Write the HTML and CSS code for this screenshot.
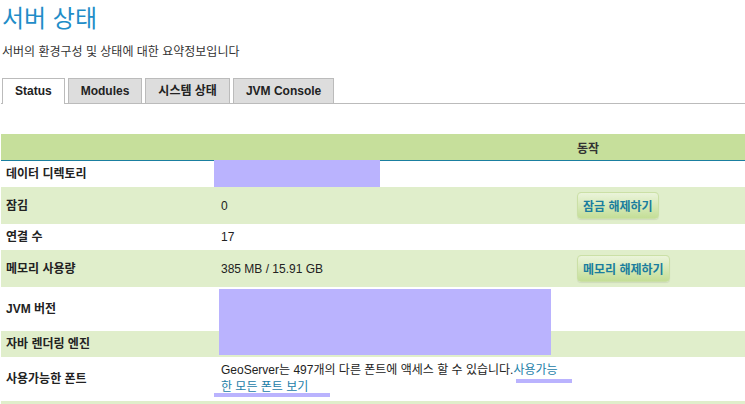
FILE: index.html
```html
<!DOCTYPE html>
<html lang="ko">
<head>
    <meta charset="UTF-8">
    <title>서버 상태</title>
    <link rel="stylesheet" href="styles.css">
</head>
<body>
    <div class="page">
        <h1 class="title">서버 상태</h1>
        <p class="intro">서버의 환경구성 및 상태에 대한 요약정보입니다</p>

        <ul class="tabs">
            <li class="tab active">Status</li>
            <li class="tab">Modules</li>
            <li class="tab">시스템 상태</li>
            <li class="tab">JVM Console</li>
        </ul>

        <div class="status-wrap">
            <table class="status">
                <thead>
                    <tr>
                        <th class="col-label"></th>
                        <th class="col-value"></th>
                        <th class="col-action">동작</th>
                    </tr>
                </thead>
                <tbody>
                    <tr>
                        <td class="label">데이터 디렉토리</td>
                        <td></td>
                        <td></td>
                    </tr>
                    <tr class="odd">
                        <td class="label">잠김</td>
                        <td>0</td>
                        <td><button class="btn">잠금 해제하기</button></td>
                    </tr>
                    <tr>
                        <td class="label">연결 수</td>
                        <td>17</td>
                        <td></td>
                    </tr>
                    <tr class="odd">
                        <td class="label">메모리 사용량</td>
                        <td>385 MB / 15.91 GB</td>
                        <td><button class="btn">메모리 해제하기</button></td>
                    </tr>
                    <tr class="tall">
                        <td class="label">JVM 버전</td>
                        <td></td>
                        <td></td>
                    </tr>
                    <tr class="odd">
                        <td class="label">자바 렌더링 엔진</td>
                        <td></td>
                        <td></td>
                    </tr>
                    <tr>
                        <td class="label">사용가능한 폰트</td>
                        <td class="fonts">GeoServer는 497개의 다른 폰트에 액세스 할 수 있습니다.<a href="#">사용가능한 모든 폰트 보기</a></td>
                        <td></td>
                    </tr>
                    <tr class="odd">
                        <td class="label"></td>
                        <td></td>
                        <td></td>
                    </tr>
                </tbody>
            </table>

            <!-- redacted areas -->
            <div class="redact r-dir"></div>
            <div class="redact r-jvm"></div>
            <div class="redact r-line1"></div>
            <div class="redact r-line2"></div>
        </div>
    </div>
</body>
</html>
```

FILE: styles.css
```css
body {
    margin: 0;
    background: white;
    font-family: "Liberation Sans", "Noto Sans CJK KR", sans-serif;
    font-size: 12px;
    color: #222;
    overflow: hidden;
}

.page {
    padding: 0 0 0 1px;
}

.title {
    margin: 0;
    padding: 4px 0 0 1px;
    font-size: 24px;
    font-weight: normal;
    line-height: 30px;
    color: #1f8dc8;
}

.intro {
    margin: 10px 0 0 1px;
    line-height: 16px;
    color: #333;
}

.tabs {
    list-style: none;
    margin: 18px 0 0;
    padding: 0 0 0 1px;
    display: flex;
    gap: 3px;
    border-bottom: 1px solid #bbb;
}

.tab {
    padding: 0 12px;
    height: 24px;
    line-height: 25px;
    margin-bottom: -1px;
    border: 1px solid #bbb;
    border-bottom: none;
    background: #dddddd;
    font-weight: bold;
    font-size: 12px;
    color: #222;
}

.tab.active {
    background: white;
    height: 25px;
}

.status-wrap {
    position: relative;
    margin-top: 30px;
}

.status {
    width: 744px;
    border-collapse: collapse;
    table-layout: fixed;
}

.status th {
    background: #c6df9b;
    height: 26px;
    padding: 0 5px;
    border-bottom: 1px solid #1a7fa0;
    text-align: left;
    font-weight: bold;
    color: #333;
}

.col-label {
    width: 205px;
}

.col-value {
    width: 346px;
}

.status td {
    padding: 5px;
    height: 16px;
    line-height: 16px;
    vertical-align: middle;
}

.status tr.odd td {
    background: #e0eecb;
}

.status tr.tall td {
    height: 34px;
}

.label {
    font-weight: bold;
    color: #222;
}

.fonts {
    line-height: 17px !important;
}

.fonts a {
    color: #1b80a8;
    text-decoration: none;
}

.btn {
    height: 27px;
    padding: 0 5px;
    border: 1px solid #cbe0a6;
    border-radius: 4px;
    background: linear-gradient(#eaf4da, #c4de97);
    font-family: "Liberation Sans", "Noto Sans CJK KR", sans-serif;
    font-size: 12px;
    font-weight: bold;
    color: #1a7d9e;
    box-shadow: 0 1px 1px rgba(0, 0, 0, 0.08);
}

.redact {
    position: absolute;
    background: #bab3fe;
}

.r-dir {
    left: 213px;
    top: 26px;
    width: 166px;
    height: 27px;
}

.r-jvm {
    left: 218px;
    top: 155px;
    width: 332px;
    height: 66px;
}

.r-line1 {
    left: 515px;
    top: 245px;
    width: 56px;
    height: 4px;
}

.r-line2 {
    left: 213px;
    top: 259px;
    width: 116px;
    height: 4px;
}
```
